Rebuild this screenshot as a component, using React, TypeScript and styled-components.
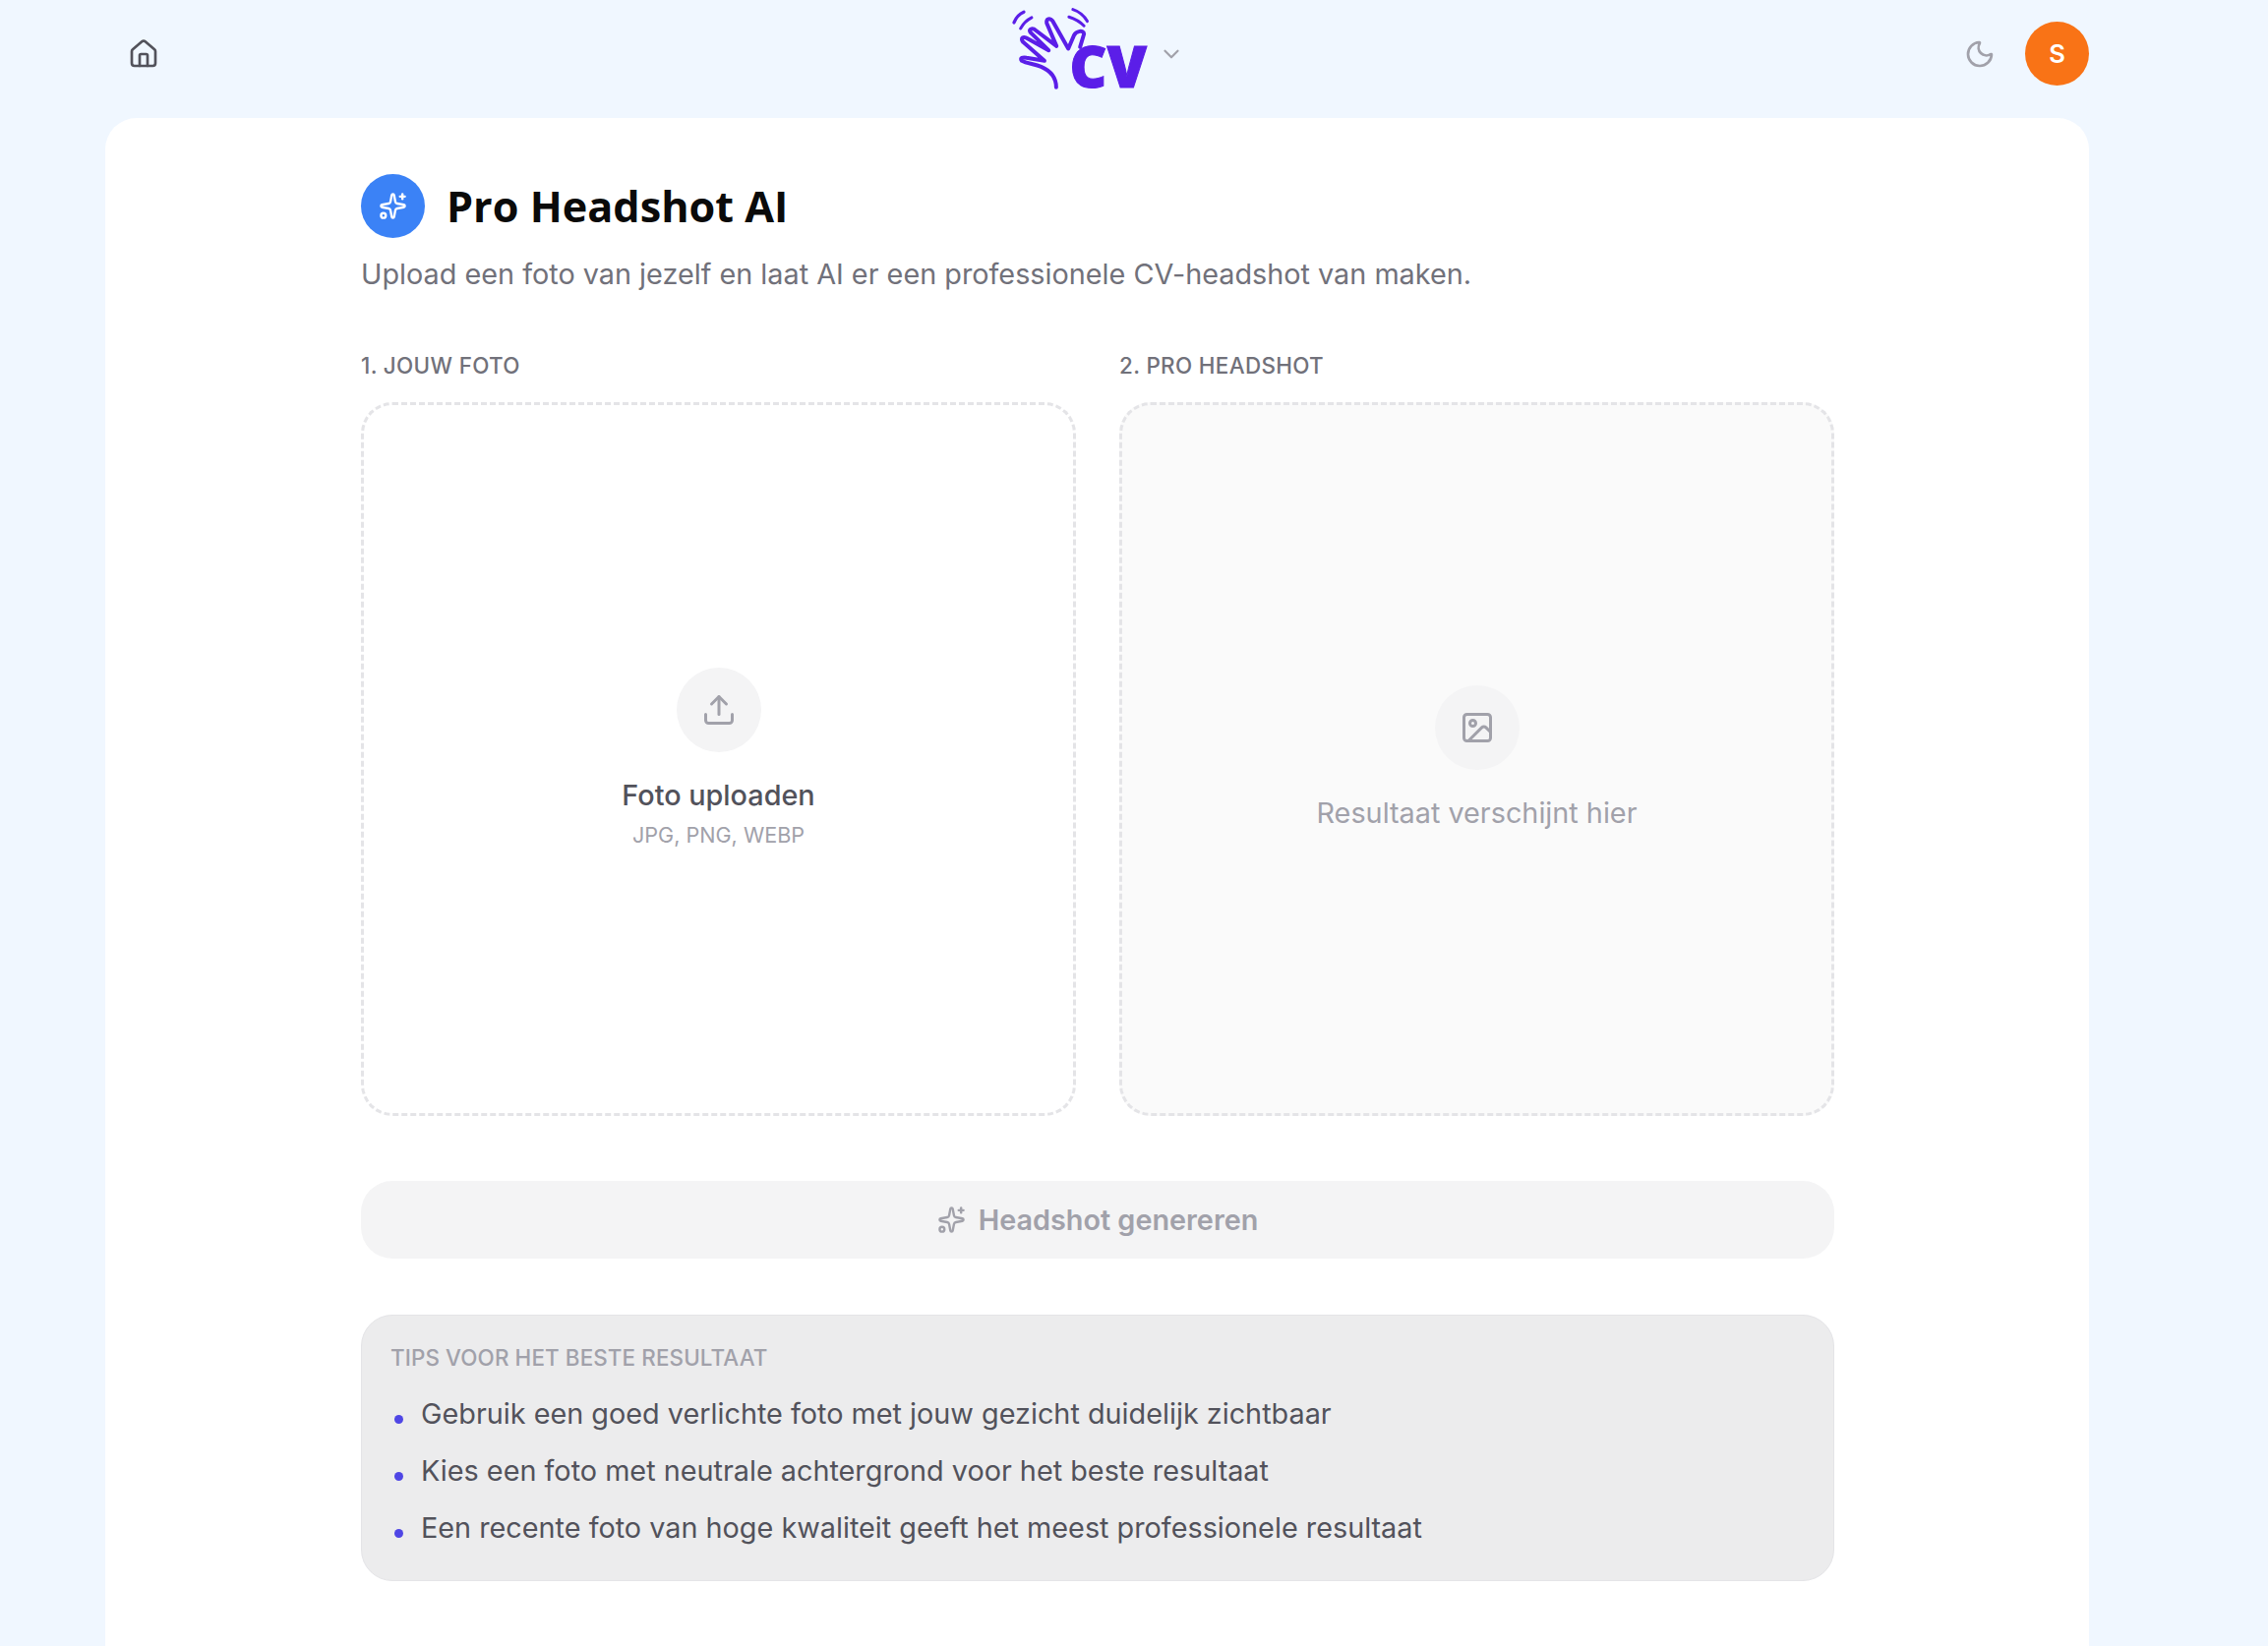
import { createGlobalStyle } from "styled-components";
import styled from "styled-components";
import { ChevronDown, House, Image, Moon, Sparkles, Upload } from "lucide-react";

const GlobalStyle = createGlobalStyle`
  html, body {
    margin: 0;
    padding: 0;
    background: #f0f7ff;
    font-family: Inter, "Liberation Sans", sans-serif;
  }
  * { box-sizing: border-box; }
`;

const Page = styled.div`
  width: 2306px;
  height: 1674px;
  overflow: hidden;
  padding: 0 182px 0 107px;
`;

const Header = styled.header`
  height: 120px;
  padding-bottom: 11px;
  display: grid;
  grid-template-columns: 1fr auto 1fr;
  align-items: center;
`;

const HomeButton = styled.div`
  display: flex;
  align-items: center;
  padding-left: 23px;
  color: #52525b;
`;

const LogoWrap = styled.div`
  display: flex;
  align-items: center;
  gap: 8px;
  color: #a1a1aa;
`;

const HeaderRight = styled.div`
  display: flex;
  align-items: center;
  justify-content: flex-end;
  gap: 30px;
  color: #a1a1aa;
`;

const Avatar = styled.div`
  width: 65px;
  height: 65px;
  border-radius: 50%;
  background: #f97316;
  color: #fff;
  font-size: 25.6px;
  font-weight: 600;
  display: flex;
  align-items: center;
  justify-content: center;
`;

const Card = styled.main`
  background: #fff;
  border-radius: 32px 32px 0 0;
  height: 1554px;
  padding: 57px 259px 0 260px;
`;

const TitleRow = styled.div`
  display: flex;
  align-items: center;
  gap: 22px;
`;

const TitleIcon = styled.div`
  width: 65px;
  height: 65px;
  border-radius: 50%;
  background: #3b82f6;
  color: #fff;
  display: flex;
  align-items: center;
  justify-content: center;
`;

const Title = styled.h1`
  margin: 0;
  font-family: "Open Sans", sans-serif;
  font-size: 43.2px;
  font-weight: 700;
  color: #0a0a0a;
`;

const Subtitle = styled.p`
  margin: 15px 0 0;
  font-size: 28.8px;
  line-height: 44px;
  color: #71717a;
`;

const Columns = styled.div`
  display: grid;
  grid-template-columns: 1fr 1fr;
  gap: 44px;
  margin-top: 55px;
`;

const ColumnLabel = styled.div`
  font-size: 22.4px;
  line-height: 32px;
  font-weight: 500;
  letter-spacing: 0.35px;
  color: #71717a;
  margin-bottom: 21px;
`;

const DropBox = styled.div<{ $muted?: boolean }>`
  height: 726px;
  border: 3px dashed #e4e4e7;
  border-radius: 32px;
  background: ${(props) => (props.$muted ? "#fafafa" : "#fff")};
  display: flex;
  flex-direction: column;
  align-items: center;
  justify-content: center;
`;

const IconCircle = styled.div`
  width: 86px;
  height: 86px;
  border-radius: 50%;
  background: #f4f4f5;
  color: #a1a1aa;
  display: flex;
  align-items: center;
  justify-content: center;
  margin-bottom: 24px;
`;

const DropTitle = styled.div`
  font-size: 28.8px;
  line-height: 40px;
  font-weight: 500;
  color: #52525b;
`;

const DropHint = styled.div`
  font-size: 21.6px;
  line-height: 32px;
  margin-top: 4px;
  color: #a1a1aa;
`;

const ResultText = styled.div`
  font-size: 28.8px;
  line-height: 40px;
  color: #a1a1aa;
`;

const GenerateButton = styled.div`
  height: 79px;
  margin-top: 66px;
  border-radius: 32px;
  background: #f4f4f5;
  color: #a1a1aa;
  font-size: 28.8px;
  font-weight: 600;
  display: flex;
  align-items: center;
  justify-content: center;
  gap: 13px;
`;

const Tips = styled.section`
  margin-top: 57px;
  height: 271px;
  border: 1px solid #e4e4e7;
  border-radius: 32px;
  background: #ececed;
  padding: 27px 30px 0 29px;
`;

const TipsTitle = styled.div`
  font-size: 22.4px;
  line-height: 32px;
  font-weight: 500;
  letter-spacing: 0.12px;
  color: #a1a1aa;
  margin-bottom: 21px;
`;

const TipList = styled.ul`
  list-style: none;
  margin: 0;
  padding: 0;
  display: flex;
  flex-direction: column;
  gap: 18px;
`;

const Tip = styled.li`
  display: flex;
  align-items: center;
  gap: 18px;
  font-size: 28.8px;
  line-height: 40px;
  color: #52525b;
  &::before {
    content: "";
    width: 9px;
    height: 9px;
    margin: 10px 0 0 4px;
    border-radius: 50%;
    background: #4f46e5;
  }
`;

function Logo() {
  return (
    <svg width="143" height="107" viewBox="150 5 430 320" fill="none">
      <g stroke="#5b1ee8" strokeLinecap="round" strokeLinejoin="round">
        <path
          strokeWidth="12"
          d="M291 268 C291 240 275 218 245 205 C225 197 200 195 186 187 C178 178 190 176 200 178 L255 187 L190 130 C180 118 190 110 205 120 L268 155 L212 100 C205 90 218 85 230 95 L292 142 L262 72 C260 58 272 55 280 65 L328 150 L345 110 C352 95 375 92 376 105 L364 145"
        />
        <path strokeWidth="10" d="M162 70 C168 55 178 44 192 38" />
        <path strokeWidth="9" d="M182 88 C190 74 202 62 216 55" />
        <path strokeWidth="9" d="M342 30 C360 36 376 48 386 66" />
        <path strokeWidth="9" d="M330 53 C346 58 364 68 376 80" />
      </g>
      <text
        x="332"
        y="270"
        fontFamily="Open Sans, sans-serif"
        fontSize="176"
        fontWeight="800"
        fill="#5b1ee8"
        stroke="#5b1ee8"
        strokeWidth="3"
      >
        CV
      </text>
    </svg>
  );
}

const tips = [
  "Gebruik een goed verlichte foto met jouw gezicht duidelijk zichtbaar",
  "Kies een foto met neutrale achtergrond voor het beste resultaat",
  "Een recente foto van hoge kwaliteit geeft het meest professionele resultaat",
];

export default function App() {
  return (
    <Page>
      <GlobalStyle />
      <Header>
        <HomeButton>
          <House size={32} />
        </HomeButton>
        <LogoWrap>
          <Logo />
          <ChevronDown size={26} />
        </LogoWrap>
        <HeaderRight>
          <Moon size={32} />
          <Avatar>S</Avatar>
        </HeaderRight>
      </Header>
      <Card>
        <TitleRow>
          <TitleIcon>
            <Sparkles size={29} />
          </TitleIcon>
          <Title>Pro Headshot AI</Title>
        </TitleRow>
        <Subtitle>Upload een foto van jezelf en laat AI er een professionele CV-headshot van maken.</Subtitle>
        <Columns>
          <div>
            <ColumnLabel>1. JOUW FOTO</ColumnLabel>
            <DropBox>
              <IconCircle>
                <Upload size={36} />
              </IconCircle>
              <DropTitle>Foto uploaden</DropTitle>
              <DropHint>JPG, PNG, WEBP</DropHint>
            </DropBox>
          </div>
          <div>
            <ColumnLabel>2. PRO HEADSHOT</ColumnLabel>
            <DropBox $muted>
              <IconCircle>
                <Image size={36} />
              </IconCircle>
              <ResultText>Resultaat verschijnt hier</ResultText>
            </DropBox>
          </div>
        </Columns>
        <GenerateButton>
          <Sparkles size={29} />
          Headshot genereren
        </GenerateButton>
        <Tips>
          <TipsTitle>TIPS VOOR HET BESTE RESULTAAT</TipsTitle>
          <TipList>
            {tips.map((tip) => (
              <Tip key={tip}>{tip}</Tip>
            ))}
          </TipList>
        </Tips>
      </Card>
    </Page>
  );
}
